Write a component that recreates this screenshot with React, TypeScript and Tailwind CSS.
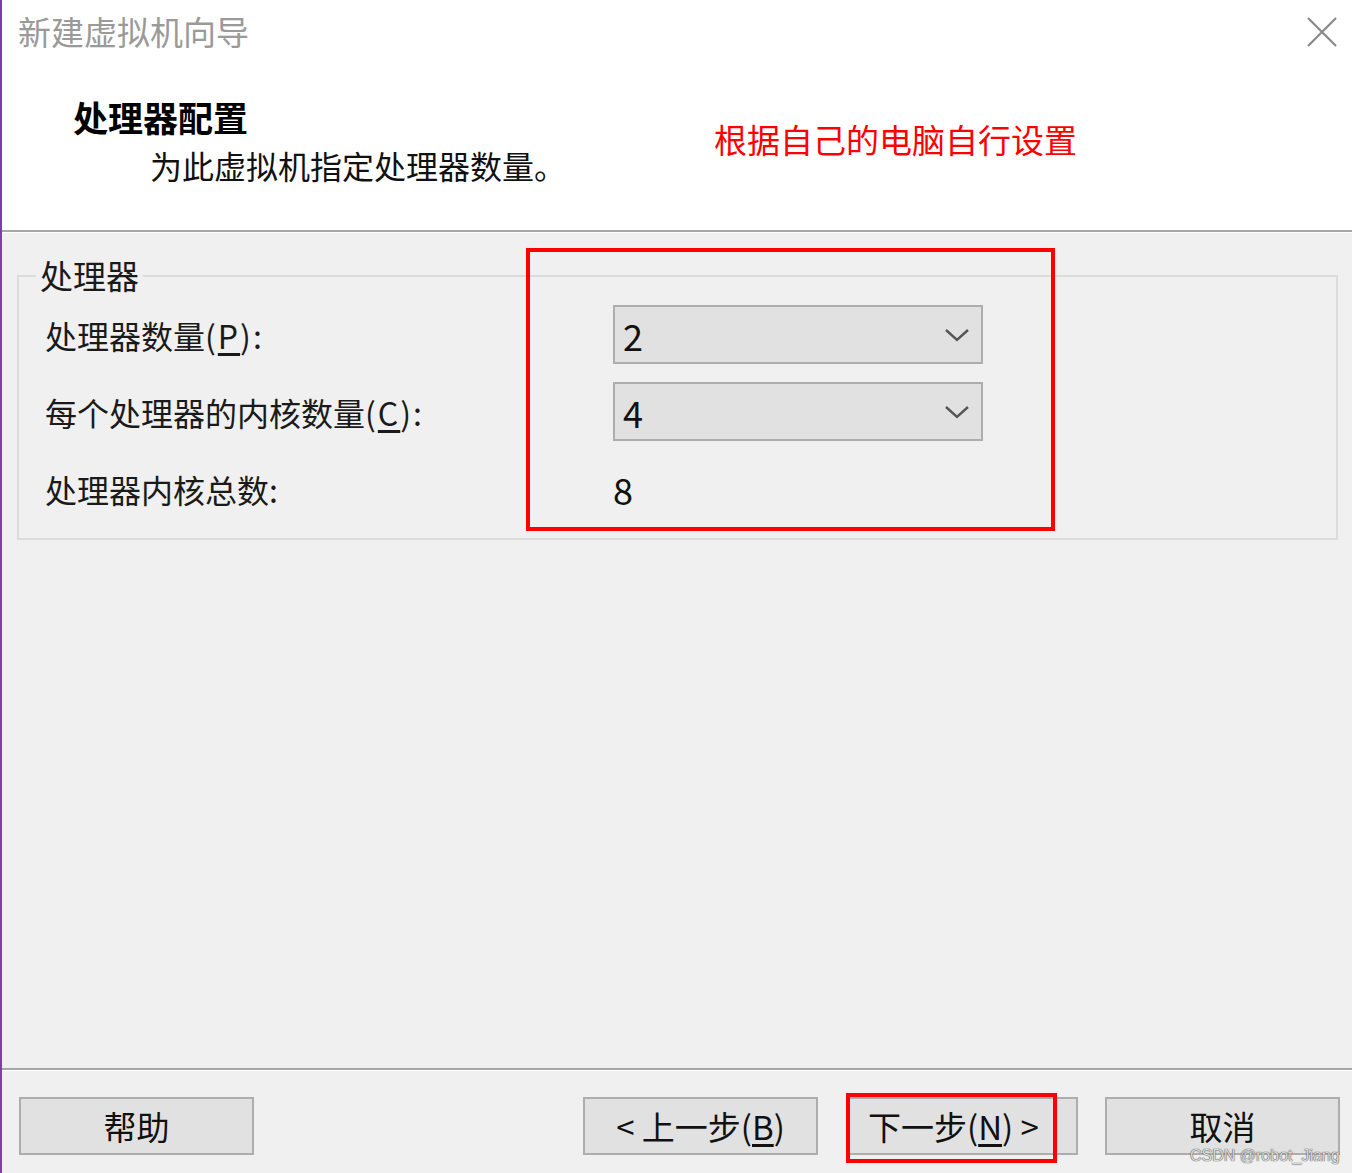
import React from "react";

const cjk = { fontFamily: '"Noto Sans CJK SC", "Noto Sans", sans-serif' };

function Chevron() {
  return (
    <svg width="26" height="16" viewBox="0 0 26 16" fill="none">
      <path d="M2 3 L13 13 L24 3" stroke="#555" strokeWidth="2.4" />
    </svg>
  );
}

function Select({ value }: { value: string }) {
  return (
    <div className="flex h-[59px] w-[370px] items-center justify-between border-2 border-[#adadad] bg-[#e1e1e1] pl-[8px] pr-[11px]">
      <span className="text-[36px] leading-none text-[#111]">{value}</span>
      <Chevron />
    </div>
  );
}

function Row({ label, children }: { label: React.ReactNode; children: React.ReactNode }) {
  return (
    <div className="flex h-[59px] items-center">
      <div className="w-[568px] text-[32px] leading-none text-[#1a1a1a]">{label}</div>
      {children}
    </div>
  );
}

export default function App() {
  return (
    <div
      className="relative flex h-[1173px] w-[1352px] flex-col overflow-hidden border-l-2 border-[#7a3eb1] bg-[#f0f0f0]"
      style={cjk}
    >
      {/* Header */}
      <div className="h-[230px] bg-white">
        <div className="flex items-start justify-between pl-[16px] pr-[14px] pt-[15px]">
          <div className="text-[33px] leading-none text-[#9a9a9a]">新建虚拟机向导</div>
          <svg width="32" height="32" viewBox="0 0 32 32" className="mt-[1px]">
            <path d="M2 2 L30 30 M30 2 L2 30" stroke="#8a8a8a" strokeWidth="2.2" />
          </svg>
        </div>
        <div className="mt-[51px] flex items-start">
          <div className="w-[712px] pl-[71px]">
            <div className="text-[35px] font-bold leading-none text-black">处理器配置</div>
            <div className="mt-[15px] pl-[77px] text-[32px] leading-none text-[#111]">
              为此虚拟机指定处理器数量。
            </div>
          </div>
          <div className="mt-[24px] text-[33px] leading-none text-[#ff0000]">根据自己的电脑自行设置</div>
        </div>
      </div>
      <div className="h-[2px] bg-[#a6a6a6]" />
      <div className="h-[1px] bg-white" />

      {/* Body */}
      <div className="relative flex-1">
        <fieldset className="ml-[15px] mr-[14px] mt-[26px] border-2 border-[#dcdcdc] pb-[20px] pl-[26px]">
          <legend className="ml-[-9px] px-[4px] text-[33px] leading-none text-[#1a1a1a]">处理器</legend>
          <div className="flex flex-col gap-[18px] pt-[13px]">
            <Row
              label={
                <span>
                  处理器数量<span className="tracking-[2px]">(<span className="underline underline-offset-4">P</span>):</span>
                </span>
              }
            >
              <Select value="2" />
            </Row>
            <Row
              label={
                <span>
                  每个处理器的内核数量<span className="tracking-[2px]">(<span className="underline underline-offset-4">C</span>):</span>
                </span>
              }
            >
              <Select value="4" />
            </Row>
            <Row label={<span>处理器内核总数:</span>}>
              <span className="text-[36px] leading-none text-[#111]">8</span>
            </Row>
          </div>
        </fieldset>
        <div className="absolute left-[524px] top-[15px] h-[283px] w-[529px] border-4 border-[#ff0000]" />
      </div>

      {/* Footer */}
      <div className="h-[2px] bg-[#a6a6a6]" />
      <div className="h-[1px] bg-white" />
      <div className="flex h-[102px] items-start pt-[26px] pl-[17px] pr-[12px]">
        <button className="flex h-[58px] w-[235px] items-center justify-center border-2 border-[#adadad] bg-[#e1e1e1] text-[33px] leading-none text-[#111]">
          帮助
        </button>
        <div className="flex-1" />
        <button className="flex h-[58px] w-[235px] items-center justify-center border-2 border-[#adadad] bg-[#e1e1e1] text-[33px] leading-none text-[#111]">
          &lt; 上一步(<span className="underline underline-offset-4">B</span>)
        </button>
        <div className="relative ml-[28px]">
          <button className="flex h-[58px] w-[232px] items-center justify-start border-2 border-[#adadad] bg-[#e1e1e1] pl-[20px] text-[33px] leading-none text-[#111]">
            下一步(<span className="underline underline-offset-4">N</span>) &gt;
          </button>
          <div className="absolute left-0 top-[-4px] h-[70px] w-[211px] border-4 border-[#ff0000]" />
        </div>
        <button className="ml-[27px] flex h-[58px] w-[235px] items-center justify-center border-2 border-[#adadad] bg-[#e1e1e1] text-[33px] leading-none text-[#111]">
          取消
        </button>
      </div>

      <div
        className="absolute left-[1188px] top-[1148px] text-[16px] leading-none text-[#d8d8d8] [text-shadow:0_0_1px_#555,0_0_1px_#555]"
        style={{ fontFamily: '"Liberation Sans", Arial, sans-serif' }}
      >
        CSDN @robot_Jiang
      </div>
    </div>
  );
}
